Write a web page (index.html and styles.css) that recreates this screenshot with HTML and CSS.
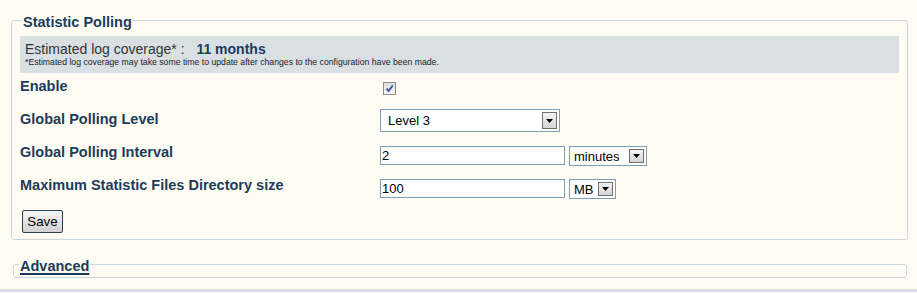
FILE: index.html
```html
<!DOCTYPE html>
<html lang="en">
<head>
  <meta charset="UTF-8" />
  <title>Statistic Polling</title>
  <link rel="stylesheet" href="styles.css">
</head>

<body>
  <div class="page">
    <fieldset class="panel">
      <legend>Statistic Polling</legend>

      <div class="coverage">
        <div class="coverage-main">Estimated log coverage* : <strong class="coverage-value">11 months</strong></div>
        <div class="coverage-note">*Estimated log coverage may take some time to update after changes to the configuration have been made.</div>
      </div>

      <div class="form-rows">
        <div class="form-row">
          <label class="form-label">Enable</label>
          <span class="checkbox">
            <svg width="11" height="11" viewBox="0 0 11 11"><path d="M2.5 5.5 L4.5 8 L8.8 2.5" fill="none" stroke="#3b4fa8" stroke-width="1.8"/></svg>
          </span>
        </div>

        <div class="form-row">
          <label class="form-label">Global Polling Level</label>
          <span class="select select-level">
            <span class="select-value">Level 3</span>
            <span class="select-btn"><svg width="7" height="4" viewBox="0 0 7 4"><polygon points="0,0 7,0 3.5,4" fill="#000"/></svg></span>
          </span>
        </div>

        <div class="form-row">
          <label class="form-label">Global Polling Interval</label>
          <input class="text-input" type="text" value="2">
          <span class="select select-unit select-minutes">
            <span class="select-value">minutes</span>
            <span class="select-btn"><svg width="7" height="4" viewBox="0 0 7 4"><polygon points="0,0 7,0 3.5,4" fill="#000"/></svg></span>
          </span>
        </div>

        <div class="form-row">
          <label class="form-label">Maximum Statistic Files Directory size</label>
          <input class="text-input" type="text" value="100">
          <span class="select select-unit select-mb">
            <span class="select-value">MB</span>
            <span class="select-btn"><svg width="7" height="4" viewBox="0 0 7 4"><polygon points="0,0 7,0 3.5,4" fill="#000"/></svg></span>
          </span>
        </div>
      </div>

      <button class="save-btn">Save</button>
    </fieldset>

    <fieldset class="panel panel-closed">
      <legend><a class="legend-link" href="#">Advanced</a></legend>
    </fieldset>
  </div>
  <div class="footer-bar"></div>
</body>
</html>
```

FILE: styles.css
```css
body {
  margin: 0;
  background: #fffcf3;
  font-family: "Liberation Sans", Arial, sans-serif;
  color: #1b3c5c;
  overflow: hidden;
}
.page {
  padding: 10px 9px 0 11px;
}
.panel {
  margin: 0;
  min-width: 0;
  border: 1px solid #ccd6e0;
  border-radius: 3px;
  padding: 5px 8px 6px 8px;
}
.panel legend {
  margin-left: 2px;
  padding: 4px 1px 0;
  font-size: 14.5px;
  font-weight: bold;
  line-height: 17px;
}
.coverage {
  background: #d9e0e3;
  padding: 5px 5px 6px;
}
.coverage-main {
  font-size: 14px;
  line-height: 16px;
  color: #333;
}
.coverage-value {
  margin-left: 8px;
  color: #1b3c5c;
}
.coverage-note {
  font-size: 8.7px;
  line-height: 10px;
  color: #222;
}
.form-rows {
  margin-top: 2px;
}
.form-row {
  display: flex;
  align-items: flex-start;
  height: 33px;
}
.form-label {
  width: 360px;
  flex-shrink: 0;
  padding-top: 3px;
  font-size: 14.5px;
  font-weight: bold;
  line-height: 17px;
}
.checkbox {
  margin: 7px 0 0 3px;
  width: 11px;
  height: 11px;
  border: 1px solid #8c8c8c;
  background: linear-gradient(#dedede, #f6f6f6);
  display: flex;
}
.text-input {
  margin: 5px 4px 0 0;
  width: 185px;
  height: 19px;
  box-sizing: border-box;
  border: 1px solid #7f9db9;
  padding: 0 1px;
  font-family: "Liberation Sans", Arial, sans-serif;
  font-size: 13px;
  color: #000;
  background: #fff;
}
.select {
  display: flex;
  align-items: center;
  box-sizing: border-box;
  border: 1px solid #7f9db9;
  background: #fff;
  font-size: 13px;
  color: #000;
  padding: 2px 2px 2px 4px;
}
.select-value {
  flex: 1;
}
.select-btn {
  width: 15px;
  height: 100%;
  box-sizing: border-box;
  border: 1px solid #6f6f6f;
  background: linear-gradient(#f6f6f6, #d4d4d4);
  display: flex;
  align-items: center;
  justify-content: center;
}
.select-level {
  margin-top: 1px;
  width: 180px;
  height: 23px;
  padding-left: 7px;
}
.select-unit {
  margin-top: 5px;
  height: 20px;
}
.select-minutes {
  width: 78px;
}
.select-mb {
  width: 47px;
}
.save-btn {
  margin-top: 3px;
  margin-left: 2px;
  width: 41px;
  height: 23px;
  padding: 0;
  font-family: "Liberation Sans", Arial, sans-serif;
  font-size: 13.33px;
  color: #000;
  border: 1px solid #2a3f55;
  border-radius: 2px;
  background: linear-gradient(#f4f4f4, #d2d2d2);
}
.panel-closed {
  margin: 14px 1px 0 2px;
  padding: 0 8px 2px 3px;
}
.legend-link {
  color: #1b3c5c;
  text-decoration: underline;
  text-decoration-thickness: 2px;
  text-underline-offset: 2px;
}
.footer-bar {
  margin-top: 11px;
  height: 3px;
  background: #d9e0e6;
}
```
